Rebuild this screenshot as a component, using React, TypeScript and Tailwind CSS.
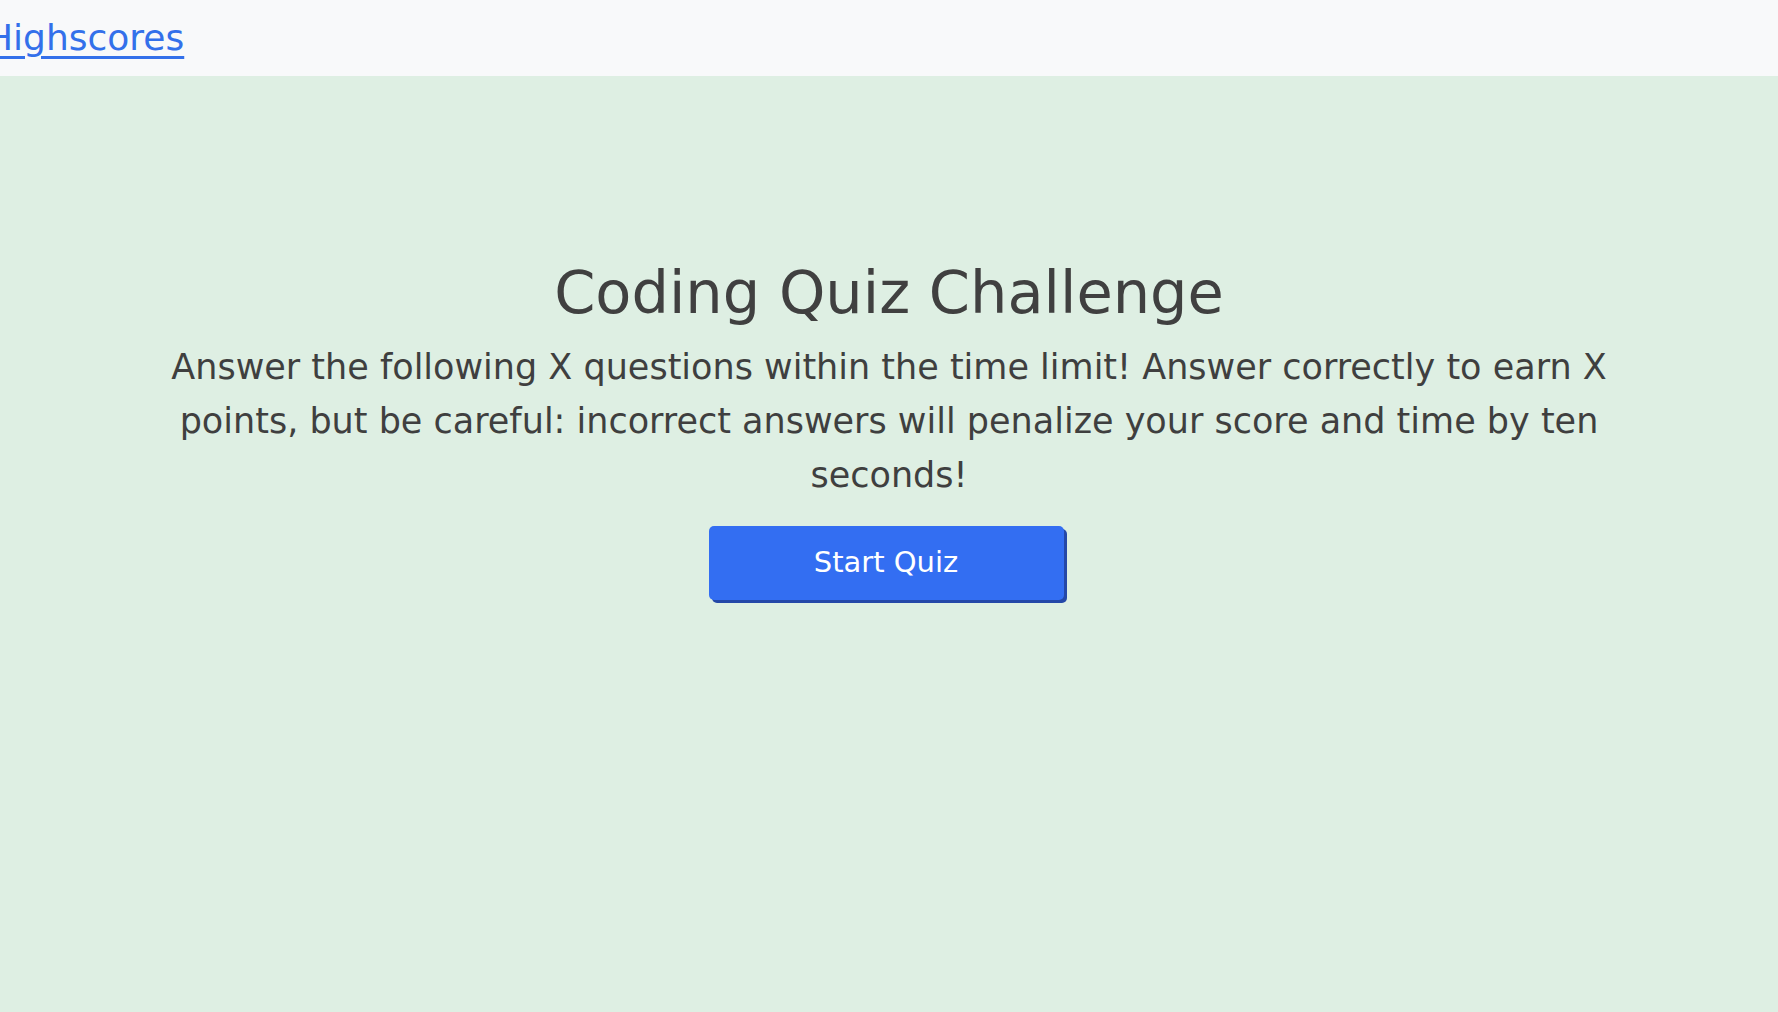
import React from "react";

export default function App() {
  return (
    <div className="min-h-[1012px] w-full bg-[#deefe3] text-[#3f3f3f]" style={{ fontFamily: '"DejaVu Sans", Verdana, sans-serif' }}>
      <header className="h-[76px] bg-[#f8f9fa] flex items-center overflow-hidden">
        <a href="#" className="-ml-[14px] text-[36px] leading-none text-[#3370ea] underline underline-offset-[6px] decoration-[3px]">Highscores</a>
      </header>
      <main className="flex flex-col items-center pt-[182px] px-[160px]">
        <h1 className="text-[59px] leading-[70px] text-[#404040]">Coding Quiz Challenge</h1>
        <p className="mt-[12px] text-[35px] leading-[54px] text-center">
          Answer the following X questions within the time limit! Answer correctly to earn X points, but be careful: incorrect answers will penalize your score and time by ten seconds!
        </p>
        <button className="mt-[24px] mr-[6px] w-[355px] h-[74px] rounded-[5px] bg-[#336ef2] text-white text-[29px] shadow-[3px_3px_0_#2448a8]">Start Quiz</button>
      </main>
    </div>
  );
}
